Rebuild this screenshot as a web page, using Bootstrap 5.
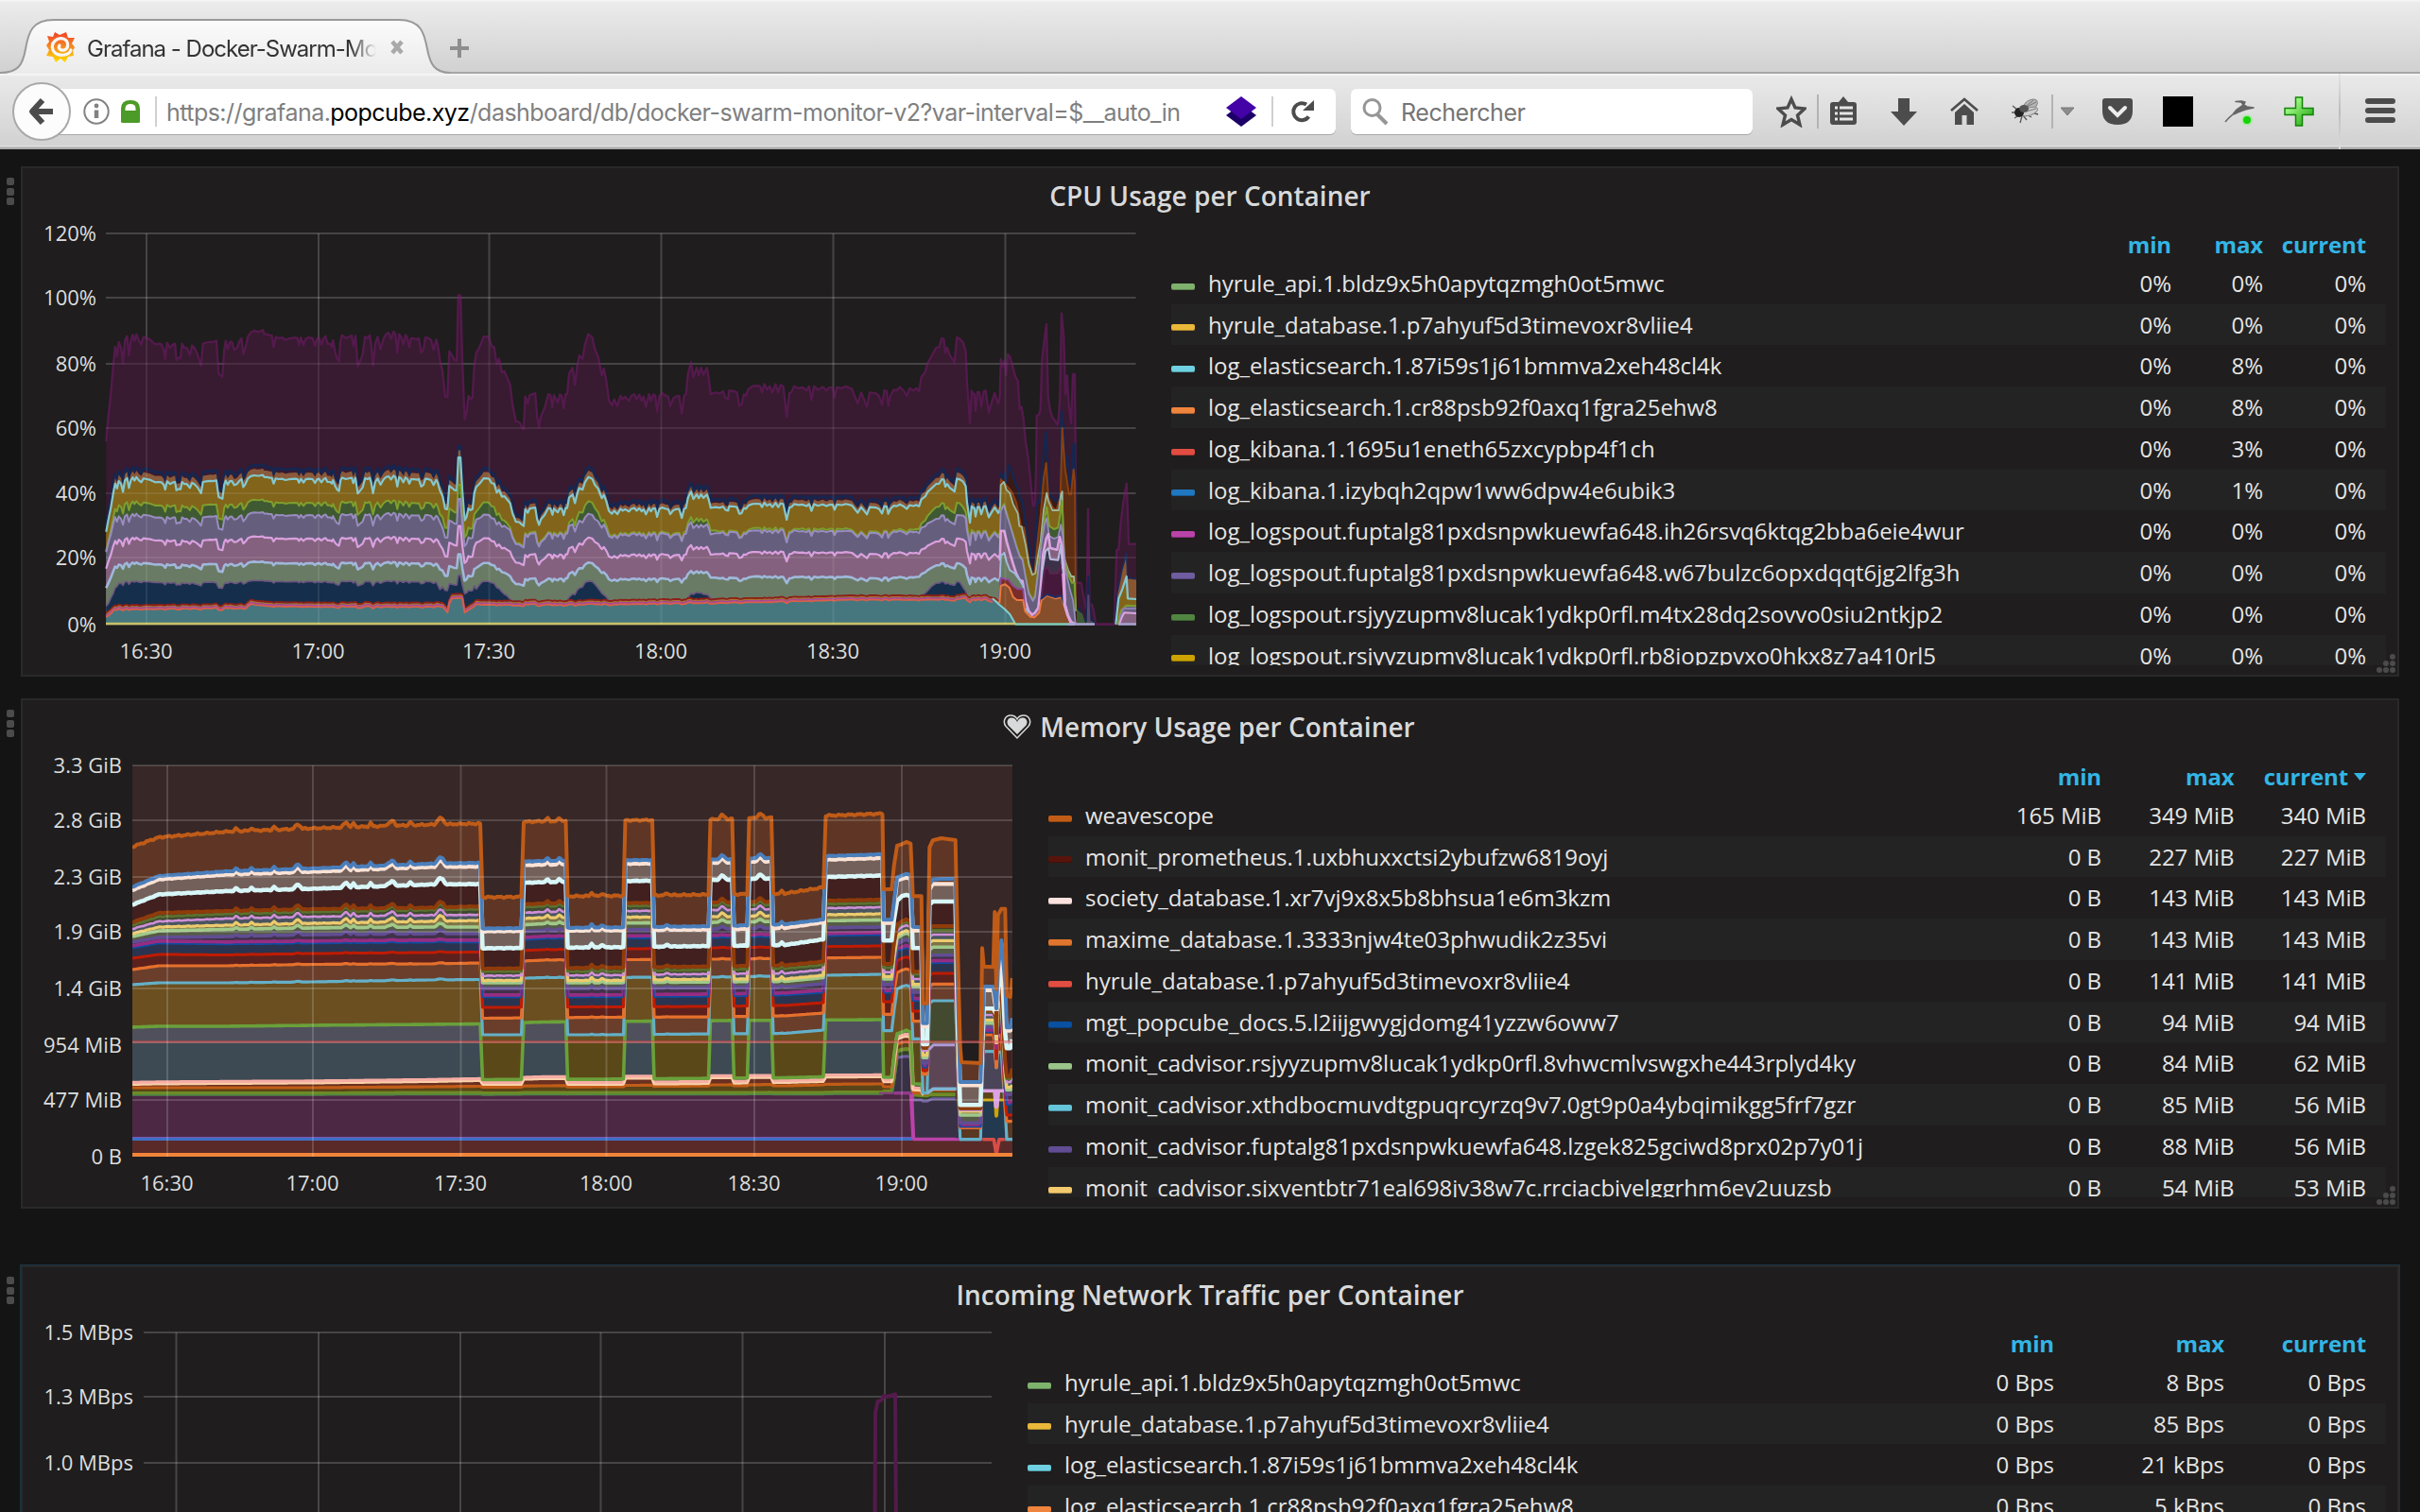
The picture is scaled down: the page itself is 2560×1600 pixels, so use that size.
<!DOCTYPE html>
<html lang="fr">
<head>
<meta charset="utf-8">
<title>Grafana - Docker-Swarm-Monitor</title>
<link rel="stylesheet" href="https://cdn.jsdelivr.net/npm/bootstrap@5.3.0/dist/css/bootstrap.min.css">
<style>
body{background:#141414;height:1600px;overflow:hidden;font-family:"Open Sans",sans-serif;color:#d8d9da}
main{height:1442px;overflow:hidden}
.tabstrip{height:78px;background:linear-gradient(#f6f6f6 0,#ebebeb 3px,#e4e4e4 30%,#d1d1d1 76px,#a6a6a6 76px)}
.tabshape{z-index:0}
.chrome-font{font-family:Inter,Roboto,sans-serif}
.tabtitle{z-index:1;left:92px;top:32px;width:306px;font-size:24px;line-height:40px;letter-spacing:-1px;color:#333;-webkit-mask-image:linear-gradient(90deg,#000 278px,transparent 306px)}
.toolbar-ff{height:80px;background:linear-gradient(#f8f8f8 0,#e9e9e9 3px,#d2d2d2 76px,#e0e0e0 76px,#e0e0e0 77px,#ababab 78px);padding-left:13px}
.backbtn{width:62px;height:62px;border:2px solid #a9a9a9;background:#fcfcfc;z-index:2}
.urlbar{width:1369px;height:48px;margin-left:-31px;border-radius:0 6px 6px 0;background:#fff;box-shadow:0 1px 0 #a8a8a8;padding-left:44px;color:#7f7f7f;font-size:25px}
.searchbar{width:425px;height:48px;margin-left:16px;border-radius:6px;background:#fff;box-shadow:0 1px 0 #a8a8a8;padding-left:11px;color:#757575;font-size:25px}
.urltext{letter-spacing:-.54px;margin-left:10px;padding-top:3px;width:1121px}
.sep{width:2px;height:32px;background:#d0d0d0}
.sepd{width:2px;height:36px;background:#b3b3b3}
.sepfull{width:2px;height:80px;background:linear-gradient(#e4e4e4,#bdbdbd 50%,#dcdcdc)}
.dashrow{padding-right:22px}
.handle{width:22px;padding:12px 7px 0 7px}
.handle i{display:block;width:8px;height:8px;border-radius:2px;background:#4b4b4b;margin-bottom:2.6px}
.gpanel{width:2516px;height:540px;background:#1f1d1d;border:2px solid #292929}
.gpanel.hot{box-shadow:0 0 0 1px #1a3442}
.ptitle{height:52px;font-size:28px;font-weight:600;line-height:52px;padding-top:3px}
.plot text{font-family:"Open Sans",sans-serif;font-size:22px;fill:#dcddde}
.legend{height:470px;margin:4px 12px 0 0;font-size:24px;letter-spacing:-.035px;color:#e5e5e5}
.lrow{height:43.75px;line-height:43.75px;padding-right:21px;white-space:nowrap}
.lrow:nth-child(odd):not(:first-child){background:#242323}
.lrow.head{color:#33b5e5;font-weight:700;padding-top:2.500px;letter-spacing:-.15px}
.swatch{width:25px;height:7px;border-radius:2px;margin:7px 14px 0 0;box-shadow:inset 0 -1px 0 rgba(0,0,0,.25)}
.grip{right:1px;bottom:1px}
</style>
<script src="https://cdn.jsdelivr.net/npm/bootstrap@5.3.0/dist/js/bootstrap.bundle.min.js"></script>
</head>
<body>
<header class="chrome-font">
  <div class="tabstrip position-relative">
    <svg class="tabshape position-absolute top-0 start-0" width="600" height="78" viewBox="0 0 600 78">
      <defs><linearGradient id="tg" x1="0" y1="0" x2="0" y2="1"><stop offset="0" stop-color="#fbfbfb"/><stop offset="1" stop-color="#ebebeb"/></linearGradient>
      <linearGradient id="gf" x1="0" y1="0" x2="0" y2="1"><stop offset="0" stop-color="#f4402a"/><stop offset=".5" stop-color="#f58b20"/><stop offset="1" stop-color="#ffdf00"/></linearGradient></defs>
      <path d="M0 77C20 77 24 68 27 52C30 34 34 21 57 21H422C446 21 449 36 452 52C455 68 460 77 476 77V78H0Z" fill="url(#tg)"/>
      <path d="M0 77C20 77 24 68 27 52C30 34 34 21 57 21H422C446 21 449 36 452 52C455 68 460 77 476 77" fill="none" stroke="#999" stroke-width="2"/>
      <g transform="translate(64 50)">
        <path d="M-6-16L-1-13L6-16L8-10L15-10L12-4L15 0L13 4L14 9L8 10L5 16L0 12L-5 16L-8 10L-15 9L-12 3L-15-2L-12-6L-14-12L-8-11Z" fill="url(#gf)"/>
        <path d="M11 3C9 9-4 11-8 3C-11-5-3-11 3-9C9-7 9 1 4 3C0 4-3 1-1-2" fill="none" stroke="#f6f6f6" stroke-width="3.2" stroke-linecap="round"/>
      </g>
      <path d="M415 44L425 56M425 44L415 56" stroke="#a9a9a9" stroke-width="4.5"/>
      <path d="M476 51H496M486 41V61" stroke="#8e8e8e" stroke-width="4"/>
    </svg>
    <div class="tabtitle position-absolute overflow-hidden text-nowrap">Grafana - Docker-Swarm-Mon</div>
  </div>
  <nav class="toolbar-ff d-flex align-items-center" aria-label="Navigation">
    <div class="backbtn rounded-circle d-flex align-items-center justify-content-center flex-shrink-0"><svg width="32" height="32" viewBox="0 0 32 32"><path d="M17 4L6 16L17 28M7 16H28" fill="none" stroke="#4c4c4c" stroke-width="6" stroke-linejoin="round" stroke-linecap="butt"/></svg></div>
    <div class="urlbar d-flex align-items-center flex-shrink-0">
      <svg width="62" height="30" viewBox="0 0 62 30"><circle cx="14" cy="15" r="12.7" fill="none" stroke="#828282" stroke-width="2"/><path d="M14 13.500V22" stroke="#828282" stroke-width="4.500"/><circle cx="14" cy="9" r="2.400" fill="#828282"/><path d="M40 14V12Q40 3 50 3Q60 3 60 12V14V26Q60 27 58 27H42Q40 27 40 26ZM44.500 14H55.500V12Q55.500 7 50 7Q44.500 7 44.500 12Z" fill="#4c9a27" fill-rule="evenodd"/></svg>
      <div class="sep" style="margin-left:14px"></div>
      <div class="urltext text-nowrap">https://grafana.<span class="text-black">popcube.xyz</span>/dashboard/db/docker-swarm-monitor-v2?var-interval=$__auto_in</div>
      <svg width="32" height="32" viewBox="0 0 32 32"><path d="M0 20L16 8L32 20L16 32Z" fill="#1d0067"/><path d="M0 12L16 0L32 12L16 24Z" fill="#4303a6"/></svg>
      <div class="sep" style="margin-left:16px"></div>
      <svg class="ms-3" width="32" height="32" viewBox="0 0 32 32"><path d="M21.500 21.500A9 9 0 1 1 19 8.500" fill="none" stroke="#4c4c4c" stroke-width="4"/><path d="M27 4V15H15Z" fill="#4c4c4c"/></svg>
    </div>
    <div class="searchbar d-flex align-items-center flex-shrink-0">
      <svg width="32" height="32" viewBox="0 0 32 32"><circle cx="11.500" cy="12" r="8.500" fill="none" stroke="#969696" stroke-width="3"/><path d="M17 19L27 29" stroke="#969696" stroke-width="4"/></svg>
      <span style="margin-left:10px;padding-top:3px;letter-spacing:-.45px">Rechercher</span>
    </div>
    <svg style="margin-left:25px" width="32" height="34" viewBox="0 0 32 34"><path d="M16 4L20 13L30 14L22.500 21L25 31L16 25.500L7 31L9.500 21L2 14L12 13Z" fill="none" stroke="#4c4c4c" stroke-width="3.400"/></svg>
    <div class="sepd" style="margin-left:11px"></div>
    <svg style="margin-left:10px" width="32" height="32" viewBox="0 0 32 32"><path d="M5 6H11L16 0L21 6H27Q30 6 30 9V27Q30 30 27 30H5Q2 30 2 27V9Q2 6 5 6Z" fill="#4c4c4c"/><path d="M7 12H10M12 12H26M7 18H10M12 18H26M7 24H10M12 24H26" stroke="#e6e6e6" stroke-width="3"/></svg>
    <svg style="margin-left:32px" width="32" height="32" viewBox="0 0 32 32"><path d="M10 2H22V16H30L16 31L2 16H10Z" fill="#4c4c4c"/></svg>
    <svg style="margin-left:32px" width="32" height="32" viewBox="0 0 32 32"><path d="M2 15L16 3L30 15" fill="none" stroke="#4c4c4c" stroke-width="2.600"/><path d="M6 17L16 8L26 17V30H18.500V20H13.500V30H6Z" fill="#4c4c4c"/></svg>
    <svg style="margin-left:33px" width="32" height="32" viewBox="0 0 32 32"><g fill="none" stroke="#555" stroke-width="1.300"><path d="M2 10L7 14M1 17L7 17M4 23L9 20M10 28L12 21M17 25L13 20M22 22L14 18M29 19L18 16"/></g><ellipse cx="21" cy="9" rx="8" ry="5" fill="#b4b4b4" stroke="#888" transform="rotate(-30 21 9)"/><ellipse cx="20" cy="16" rx="9" ry="4" fill="#cfcfcf" stroke="#8a8a8a" transform="rotate(-20 20 16)"/><path d="M15 12L27 6M16 16L27 13M17 10L24 4" stroke="#777" stroke-width="1"/><ellipse cx="9" cy="17" rx="5" ry="5" fill="#222"/><ellipse cx="14" cy="13" rx="5" ry="4" fill="#555"/></svg>
    <div class="sepd" style="margin-left:11px"></div>
    <svg style="margin-left:8px" width="14" height="12" viewBox="0 0 14 12"><path d="M0 2H14L7 10Z" fill="#8c8c8c" stroke="#777"/></svg>
    <svg style="margin-left:30px" width="32" height="32" viewBox="0 0 32 32"><path d="M3 2H29Q32 2 32 5V15Q32 30 16 30Q0 30 0 15V5Q0 2 3 2Z" fill="#4c4c4c"/><path d="M8 12L16 20L24 12" fill="none" stroke="#ededed" stroke-width="4" stroke-linecap="round"/></svg>
    <svg style="margin-left:32px" width="32" height="32"><rect width="32" height="32" fill="#000"/></svg>
    <svg style="margin-left:33px" width="32" height="34" viewBox="0 0 32 34"><path d="M1 28Q5 23 9 20L13 15L20 10L18 7L12 6.500L18 6L22 7L20.500 10L24 12L31 13L22 15L14 18L10 20" fill="#666" stroke="#666" stroke-width="1.500" stroke-linejoin="round"/><circle cx="24" cy="26" r="6" fill="#5cff47" opacity=".35"/><circle cx="24" cy="26" r="4" fill="#13d404"/></svg>
    <svg style="margin-left:31px" width="32" height="32" viewBox="0 0 32 32"><defs><linearGradient id="gp" x1="0" y1="0" x2="1" y2="1"><stop offset="0.200" stop-color="#a8ff8c"/><stop offset="1" stop-color="#119a00"/></linearGradient></defs><path d="M12.500 1H19.500V12.500H31V19.500H19.500V31H12.500V19.500H1V12.500H12.500Z" fill="url(#gp)" stroke="#128408" stroke-width="1.500"/></svg>
    <div class="sepfull" style="margin-left:26px"></div>
    <svg style="margin-left:26px" width="32" height="30" viewBox="0 0 32 30"><path d="M3 4H29M3 14H29M3 24H29" stroke="#4c4c4c" stroke-width="6" stroke-linecap="round"/></svg>
  </nav>
</header>

<main>
  <section class="dashrow d-flex" style="padding-top:18px">
    <div class="handle"><i></i><i></i><i></i></div>
    <div class="gpanel position-relative">
      <div class="ptitle text-center">CPU Usage per Container</div>
      <div class="d-flex">
        <svg class="plot flex-shrink-0" id="cpu" width="1215" height="484" viewBox="24 230 1215 484"></svg>
        <div class="legend flex-grow-1 overflow-hidden" id="lg1"></div>
      </div>
    </div>
  </section>
  <section class="dashrow d-flex" style="padding-top:23px">
    <div class="handle"><i></i><i></i><i></i></div>
    <div class="gpanel position-relative">
      <div class="ptitle d-flex justify-content-center align-items-center"><svg width="30" height="28" viewBox="0 0 30 28" style="margin:0 9px 0 -2px"><path d="M15 26L3 13.500C-1 8 3 2 8 2C11.500 2 14 4 15 6C16 4 18.500 2 22 2C27 2 31 8 27 13.500Z" fill="none" stroke="#d8d9da" stroke-width="1.500"/><path d="M15 22L5.500 12.500C3 8.500 5.500 4.500 9 4.500C12 4.500 14 6.500 15 9C16 6.500 18 4.500 21 4.500C24.500 4.500 27 8.500 24.500 12.500Z" fill="#d8d9da"/></svg>Memory Usage per Container</div>
      <div class="d-flex">
        <svg class="plot flex-shrink-0" id="mem" width="1085" height="484" viewBox="24 793 1085 484"></svg>
        <div class="legend flex-grow-1 overflow-hidden" id="lg2"></div>
      </div>
    </div>
  </section>
  <section class="dashrow d-flex" style="padding-top:60px">
    <div class="handle"><i></i><i></i><i></i></div>
    <div class="gpanel hot position-relative">
      <div class="ptitle text-center">Incoming Network Traffic per Container</div>
      <div class="d-flex">
        <svg class="plot flex-shrink-0" id="net" width="1063" height="484" viewBox="24 1393 1063 484"></svg>
        <div class="legend flex-grow-1 overflow-hidden" id="lg3"></div>
      </div>
    </div>
  </section>
</main>

<script>
/* ---------- legends ---------- */
function legend(id, w, rows, sorted){
  const cell=(t,i)=>`<span class="text-end flex-shrink-0" style="width:${w[i]}px">${t}</span>`;
  const caret=sorted?' <svg width="13" height="8" viewBox="0 0 13 8" style="margin:0 0 4px 0"><path d="M0 0H13L6.500 8Z" fill="#33b5e5"/></svg>':'';
  document.getElementById(id).innerHTML=
    `<div class="lrow head d-flex"><span class="flex-grow-1"></span>${cell('min',0)}${cell('max',1)}${cell('current'+caret,2)}</div>`+
    rows.map(r=>`<div class="lrow d-flex align-items-center"><i class="swatch flex-shrink-0" style="background:${r[0]}"></i><span class="flex-grow-1">${r[1]}</span>${cell(r[2],0)}${cell(r[3],1)}${cell(r[4],2)}</div>`).join('');
}
legend('lg1',[90,97,109],[
 ['#7eb26d','hyrule_api.1.bldz9x5h0apytqzmgh0ot5mwc','0%','0%','0%'],
 ['#eab839','hyrule_database.1.p7ahyuf5d3timevoxr8vliie4','0%','0%','0%'],
 ['#6ed0e0','log_elasticsearch.1.87i59s1j61bmmva2xeh48cl4k','0%','8%','0%'],
 ['#ef843c','log_elasticsearch.1.cr88psb92f0axq1fgra25ehw8','0%','8%','0%'],
 ['#e24d42','log_kibana.1.1695u1eneth65zxcypbp4f1ch','0%','3%','0%'],
 ['#1f78c1','log_kibana.1.izybqh2qpw1ww6dpw4e6ubik3','0%','1%','0%'],
 ['#ba43a9','log_logspout.fuptalg81pxdsnpwkuewfa648.ih26rsvq6ktqg2bba6eie4wur','0%','0%','0%'],
 ['#705da0','log_logspout.fuptalg81pxdsnpwkuewfa648.w67bulzc6opxdqqt6jg2lfg3h','0%','0%','0%'],
 ['#508642','log_logspout.rsjyyzupmv8lucak1ydkp0rfl.m4tx28dq2sovvo0siu2ntkjp2','0%','0%','0%'],
 ['#cca300','log_logspout.rsjyyzupmv8lucak1ydkp0rfl.rb8iopzpvxo0hkx8z7a410rl5','0%','0%','0%']]);
legend('lg2',[120,140.5,139.5],[
 ['#c15c17','weavescope','165 MiB','349 MiB','340 MiB'],
 ['#58140c','monit_prometheus.1.uxbhuxxctsi2ybufzw6819oyj','0 B','227 MiB','227 MiB'],
 ['#fce2de','society_database.1.xr7vj9x8x5b8bhsua1e6m3kzm','0 B','143 MiB','143 MiB'],
 ['#e0752d','maxime_database.1.3333njw4te03phwudik2z35vi','0 B','143 MiB','143 MiB'],
 ['#e24d42','hyrule_database.1.p7ahyuf5d3timevoxr8vliie4','0 B','141 MiB','141 MiB'],
 ['#0a50a1','mgt_popcube_docs.5.l2iijgwygjdomg41yzzw6oww7','0 B','94 MiB','94 MiB'],
 ['#9ac48a','monit_cadvisor.rsjyyzupmv8lucak1ydkp0rfl.8vhwcmlvswgxhe443rplyd4ky','0 B','84 MiB','62 MiB'],
 ['#65c5db','monit_cadvisor.xthdbocmuvdtgpuqrcyrzq9v7.0gt9p0a4ybqimikgg5frf7gzr','0 B','85 MiB','56 MiB'],
 ['#614d93','monit_cadvisor.fuptalg81pxdsnpwkuewfa648.lzgek825gciwd8prx02p7y01j','0 B','88 MiB','56 MiB'],
 ['#f2c96d','monit_cadvisor.sjxyentbtr71eal698jv38w7c.rrciacbiyelggrhm6ey2uuzsb','0 B','54 MiB','53 MiB']],true);
legend('lg3',[120,180,150],[
 ['#7eb26d','hyrule_api.1.bldz9x5h0apytqzmgh0ot5mwc','0 Bps','8 Bps','0 Bps'],
 ['#eab839','hyrule_database.1.p7ahyuf5d3timevoxr8vliie4','0 Bps','85 Bps','0 Bps'],
 ['#6ed0e0','log_elasticsearch.1.87i59s1j61bmmva2xeh48cl4k','0 Bps','21 kBps','0 Bps'],
 ['#ef843c','log_elasticsearch.1.cr88psb92f0axq1fgra25ehw8','0 Bps','5 kBps','0 Bps']]);
document.querySelectorAll('.gpanel').forEach(p=>p.insertAdjacentHTML('beforeend',
 '<svg class="grip position-absolute" width="22" height="22" viewBox="0 0 22 22" fill="#4b4b4b"><circle cx="18" cy="4" r="3"/><circle cx="11" cy="11" r="3"/><circle cx="18" cy="11" r="3"/><circle cx="4" cy="18" r="3"/><circle cx="11" cy="18" r="3"/><circle cx="18" cy="18" r="3"/></svg>'));

/* ---------- shared chart helpers ---------- */
const P=s=>s.trim().split(/[;\s]+/).map(p=>p.split(',').map(Number));
const line=p=>'M'+p.map(a=>a[0].toFixed(1)+' '+a[1].toFixed(1)).join('L');
const area=(p,b)=>line(p)+`L${p[p.length-1][0]} ${b}L${p[0][0]} ${b}Z`;
const fillp=(p,b,c,x='')=>`<path d="${area(p,b)}" fill="${c}" ${x}/>`;
const strk=(p,c,w=2)=>`<path d="${line(p)}" fill="none" stroke="${c}" stroke-width="${w}" stroke-linejoin="round"/>`;
function lerpAt(st,x){ if(x<=st[0][0])return st[0][1]; for(let i=1;i<st.length;i++) if(x<=st[i][0]){const a=st[i-1],b=st[i];return a[1]+(b[1]-a[1])*(x-a[0])/(b[0]-a[0]);} return st[st.length-1][1]; }
function grid(x0,x1,y0,y1,hs,vs,o){ return `<g stroke="#fff" stroke-opacity="${o}" stroke-width="2">`+hs.map(y=>`<path d="M${x0} ${y}H${x1}"/>`).join('')+vs.map(x=>`<path d="M${x} ${y0}V${y1}"/>`).join('')+'</g>'; }
function labels(hs,ht,xr,vs,yb){ return hs.map((y,i)=>ht[i]?`<text x="${xr}" y="${y+8}" text-anchor="end">${ht[i]}</text>`:'').join('')+(yb?vs.map((x,i)=>`<text x="${x}" y="${yb}" text-anchor="middle">${T[i]}</text>`).join(''):''); }
const T=['16:30','17:00','17:30','18:00','18:30','19:00'];

/* ---------- CPU ---------- */
const rawA=P(`284,872 290,800 297,730 303,650 308,597 313,625 318,583 324,600 329,645 334,580 340,566 345,622 350,580 355,562 360,580 365,560 371,578 378,590 384,568 392,572 400,575 408,583 416,590 424,588 432,590 438,605 442,632 447,585 455,600 463,590 468,588 472,635 478,628 483,630 487,588 493,600 500,600 508,622 514,593 520,600 528,618 538,652 543,588 552,585 562,582 570,583 579,579 585,675 595,684 600,605 604,580 609,604 615,583 620,582 627,606 634,600 641,580 646,572 651,618 657,598 663,568 671,555 680,550 688,553 696,552 703,548 707,560 714,560 721,564 727,564 732,598 738,568 746,572 755,570 764,577 773,573 790,570 796,572 800,592 805,570 812,592 818,573 826,570 836,572 843,594 848,574 853,570 860,590 866,572 871,566 876,588 884,588 888,598 891,578 897,614 902,632 907,640 911,580 915,563 925,572 933,568 941,564 945,595 951,565 957,654 964,636 970,620 977,567 983,572 989,564 993,590 998,652 1004,588 1010,568 1018,604 1026,574 1033,560 1040,556 1046,574 1053,553 1058,560 1063,614 1068,560 1073,568 1079,590 1085,562 1090,572 1095,598 1100,572 1108,573 1116,575 1120,572 1127,614 1133,605 1138,570 1145,571 1153,577 1160,606 1167,576 1171,590 1177,636 1184,670 1191,742 1197,744 1202,610 1209,622 1216,635 1222,638 1226,448 1232,448 1237,640 1243,808 1248,790 1253,740 1259,750 1264,744 1269,650 1274,615 1282,600 1288,585 1294,567 1305,568 1309,572 1315,595 1322,598 1329,648 1335,632 1343,672 1349,668 1356,685 1365,708 1371,765 1380,814 1389,816 1396,830 1401,838 1405,742 1412,762 1417,738 1432,732 1437,800 1442,832 1447,800 1457,775 1467,735 1473,738 1478,774 1482,738 1492,760 1498,736 1503,740 1508,776 1513,735`).map(([x,y])=>[x/2.529,150+y/2.751]);
const rawB=P(`0,735 5,675 14,658 20,708 26,655 31,622 40,632 46,590 55,560 65,570 72,605 80,625 86,660 90,680 95,660 102,700 108,752 116,768 122,750 130,770 138,740 144,750 150,742 160,755 166,740 174,735 180,750 187,736 193,754 198,742 204,772 212,735 217,754 223,736 228,738 233,786 239,740 246,732 256,740 262,742 267,770 275,748 281,742 290,740 297,792 303,740 308,735 313,675 321,642 327,685 336,658 341,680 347,658 353,678 362,658 367,690 372,735 384,730 396,733 404,726 410,745 417,750 420,724 432,726 440,730 446,768 452,765 458,735 463,740 470,720 480,712 490,710 500,712 505,730 511,705 518,722 525,712 532,730 540,706 547,730 553,708 560,712 569,802 576,732 582,728 588,712 600,718 610,715 620,724 627,712 633,752 640,712 650,722 662,714 672,724 680,715 688,716 693,745 699,715 712,718 722,712 738,720 745,740 753,762 762,730 770,752 777,772 784,730 800,732 808,740 816,766 822,724 828,726 832,768 838,740 846,722 854,724 862,714 872,725 880,740 888,718 897,724 905,718 912,726 918,685 928,670 934,645 944,625 956,600 964,598 971,572 976,575 980,615 985,600 992,622 1004,642 1010,570 1018,574 1026,585 1033,610 1036,700 1044,820 1048,725 1053,735`).map(([x,y])=>[600+x/2.45,150+y/2.751]);
const C=s=>P(s).map(([x,y])=>[1030+x/3,310+y/3]);
const rawC1=C(`2,320 6,375 12,315 18,315 24,360 32,312 38,310 48,380 58,345 67,318 78,352 83,330`);
const rawC2=C(`86,210 90,235 97,215 103,262 109,195 116,205 124,235 132,265 140,280 146,370 152,362 158,400 165,475 172,515 180,590 188,676 194,676 198,560 200,390 206,388 212,372 217,215 224,150 231,100 236,330 243,375 250,395 258,405 266,418 270,395 274,330 279,65 286,140 291,322 296,262 302,360 309,414 315,258 321,258 324,600 327,920 341,920 348,960 355,1000 359,985 363,686 368,985 375,990 381,1010 387,1052 446,1052 449,950 454,816 460,815 466,740 474,670 485,605 489,700 492,797 516,797`);
const top1=[...rawA,...rawB,...rawC1], Z=661, U=3.45;
const pct=top1.map(p=>(Z-p[1])/U);
const smooth=top1.map((p,i)=>{let s=0,n=0;for(let k=0;k<top1.length;k++)if(Math.abs(top1[k][0]-p[0])<9){s+=pct[k];n++}return s/n});
const wgt=smooth.map((v,i)=>{const x=top1[i][0];if(x>466&&x<502)return 1;return Math.max(0,Math.min(1,(v-71)/13))});
const teal=[[112,3],[125,4.6],[260,5],[265,6.2],[285,5.6],[345,5.4],[469,5.4],[474,3.4],[476,8],[489,8.2],[491,3.6],[504,6],[600,6],[700,6.4],[800,6.8],[900,7.6],[1045,7.6],[1057,6]];
const tl=top1.map((p,i)=>[p[0],lerpAt(teal,p[0])+((p[0]>466&&p[0]<502)?0:(pct[i]-smooth[i])*.07)]);
const band=(l,h,floor)=>top1.map((p,i)=>{const f=l+(h-l)*wgt[i];let v=f*pct[i];if(floor)v=Math.max(v,tl[i][1]+floor);return [p[0],Z-v*U]});
const tealL=d=>tl.map(p=>[p[0],Z-(p[1]+d)*U]);
let s=`<g>`+grid(112,1201.500,247,661,[247,315,385,453,522,590,661],[155,337,517.500,699.500,881.500,1063.500],.1)+`</g>`;
const full=[...top1,...rawC2];
s+=fillp(full,Z,'#381a31')+strk(full,'#531a4c',2.400);
const nvy=band(.54,.543),brn=band(.525,.53),lb=band(.506,.508),lime=band(.402,.425),pg=band(.396,.382),pk=band(.305,.3),sg=band(.2,.214),nv=band(.1,.15,1.200);
s+=strk(nvy,'#17264f',3)+fillp(brn,Z,'#8a5a3a')+fillp(lb,Z,'#82641a')+strk(lb,'#84c8cf',2.200);
s+=fillp(lime,Z,'#3f5a32')+strk(lime,'#7e9e2f')+fillp(pg,Z,'#655f7d')+strk(pg,'#9a8cc0')+fillp(pk,Z,'#84617e')+strk(pk,'#d9a0de',2.200);
s+=fillp(sg,Z,'#697b64')+strk(sg,'#9fb8da',2.600)+fillp(nv,Z,'#152e4b')+strk(nv,'#6b5580',1.600);
s+=fillp(tealL(0),Z,'#46777f')+strk(tealL(1.300),'#8e1f17',2)+strk(tealL(.8),'#a8742c',1.600)+strk(tealL(.4),'#a8489e',2)+strk(tealL(0),'#d8604a',1.800);
/* redistribution phase after 19:00 */
const q=(pts,f,st,w)=>{const p=C(pts);return fillp(p,Z,f)+(st?strk(p,st,w||2):'')};
s+=q('83,668 86,570 92,590 98,575 104,600 110,547 118,560 126,585 134,608 142,625 148,660 155,660 160,700 170,770 180,820 186,885 193,885 200,670 207,665 212,640 218,540 230,440 237,620 245,645 260,660 268,665 275,620 279,375 285,430 291,560 297,515 303,590 309,612 317,480 321,480 324,1000 331,1003 340,1015 355,1048 359,1040 364,900 368,1030 375,1035 384,1050 387,1052','#3a1a18','#17264f',2.600);
s+=q('83,690 86,592 104,612 120,630 135,665 142,700 150,740 160,745 175,850 186,890 193,890 205,770 213,700 222,590 230,540 237,650 250,680 262,690 275,650 281,430 290,560 303,640 309,640 317,560 321,600 324,1010','#5b2d12','#8a3f10');
s+=q('83,700 86,610 96,600 104,625 115,635 125,670 140,700 145,740 152,742 165,800 175,860 186,895 196,890 203,840 212,790 222,690 232,635 237,660 250,690 270,690 277,640 281,630 285,830 290,850 300,880 310,900 318,900 324,1010','#82641a','#9ab8a0',1.800);
s+=q('83,780 86,690 96,670 105,700 120,750 135,800 145,830 155,845 165,900 175,950 188,975 195,960 205,880 215,790 225,720 232,680 240,740 255,750 268,745 275,700 281,660 287,840 300,895 312,920 320,920 324,1010','#3f5a32','#7e9e2f');
s+=q('83,784 86,693 96,674 105,704 120,754 135,804 145,834 155,849 165,905 175,955 188,978 195,965 205,885 215,795 225,735 232,715 240,772 255,780 268,775 277,735 283,770 292,880 305,940 315,975 324,1052','#655f7d','#9a8cc0',1.600);
s+=q('83,850 86,755 97,755 105,790 115,825 125,860 135,890 145,910 155,915 165,980 175,1010 185,1022 195,1015 205,1000 213,930 220,830 230,780 237,765 243,810 265,815 273,775 280,800 287,900 290,990 300,1025 310,1045 320,1052','#84617e','#dca4e0',2.600);
s+=q('83,910 86,835 97,825 105,855 115,880 130,890 145,910 157,930 163,1000 175,1015','#697b64','#9fb8da');
s+=q('213,975 220,870 228,820 237,810 243,845 268,848 277,800 283,890 290,990 296,1052','#3c3148','#b8bce0');
s+=q('213,985 224,880 235,870 243,890 268,890 275,865 283,920 290,1000','#46193c','#5a2450');
s+=q('82,970 86,905 110,910 125,930 140,940 157,940 163,1000','#7a2c28','#8a4a98');
s+=q('82,985 86,930 100,925 113,935 125,965 137,975 157,975 163,1010 180,1028 193,1030 208,1015 215,975 232,960 260,970 278,965 290,1000 302,1030 308,1052','#864e2b','#e87840');
s+=strk(C('213,972 232,957 260,966 278,961 290,996'),'#1f2f66',2)+q('60,970 82,990 100,1005 115,1020 133,1052','#46777f','#80cdd0');
s+=strk(C('284,890 289,990 298,1022 308,1045 320,1050'),'#dca4e0',3);
s+=q('327,1003 335,1012 345,1018 355,1050 360,1042 366,1040 375,1042 384,1050','#3f5a32')+strk(C('362,1052 364,960 368,1052'),'#55466a',2);
s+=q('448,1052 454,960 470,880 485,825 489,905 516,908','#8a5632','#1c2b55',1.800)+q('451,1052 460,970 472,940 485,900 489,970 516,972','#82641a','#84c8cf',2.200)+q('456,1052 462,1030 468,1008 485,992 516,994','#655f7d','#7e9e2f')+strk(C('462,1040 475,1002 516,1002'),'#8a7cb0')+q('462,1052 470,1030 478,1015 516,1017','#84617e','#dca4e0');
s+=`<path d="M112 660H1074" stroke="#c9c169" stroke-width="2.500"/><path d="M1074 660.500H1137" stroke="#80cdb8" stroke-width="2.500"/><path d="M1130 660.500H1158M1183 660.500H1202" stroke="#a9a4d4" stroke-width="2.500"/><path d="M1158 660.500H1179" stroke="#531a4c" stroke-width="2.500"/>`;
const ch=[247,315,385,453,522,590,661],cv=[155,337,517.500,699.500,881.500,1063.500];
s+=grid(112,1201.500,247,661,ch.slice(0,6),cv,.085)+labels(ch,['120%','100%','80%','60%','40%','20%','0%'],102,cv.map(x=>x-.5),697);
document.getElementById('cpu').innerHTML=s;

/* ---------- memory ---------- */
/* columns: x, then o bl wp cw br ol vi ye lg pu mg re or cy li sa ob gr pd ma */
const hi=[[140,896,938.5,942,957.5,976,979,983,988,991,997,1001,1014,1026,1042,1087,1146,1151,1157,1158,1158],
[168,886,927,930.5,946.5,966,970,975,981,985,992,996,1010,1022,1040,1086,1145.5,1151,1157,1158,1158],
[240,880,922,925.5,943,964,967,972,979,983.5,991,997,1010.5,1022,1040,1086,1145,1151,1157,1158,1158],
[331,876.5,919,922.5,940.5,962,965,970,977,982,989,996,1009,1020.500,1039,1085,1144.500,1151,1157,1158,1158],
[455,872.5,914,917.5,936,960.5,963,968.5,975,981,988,995,1008,1020,1037,1084,1143,1150,1156.5,1158,1158],
[508,871.5,913,917,935.5,959,962,968,974,981,988,995,1007.5,1019,1036.500,1083.500,1142,1149.500,1156.500,1157.500,1157.500],
[575,869,911,915,933.5,956,959,965,971,977.5,984.5,991,1005,1016,1034.500,1081.500,1140,1149,1156.500,1157.500,1157.500],
[762,867,909.500,913,931,955,958,963,970,976,983,990,1003,1015,1034,1080,1139,1148,1156.500,1157.500,1157.500],
[933,861,904,908,926.5,952,955.700,960,967,973.500,981,987,1001,1013,1031,1079,1138,1147,1156,1157,1157]];
const lo=[[510,949.5,982.5,985.5,1003.5,1025,1028,1032.5,1037.5,1040,1046,1053,1066,1077.500,1095,1142.500,1146,1150.500,1157,1158,1158],
[640,948,981.500,984.500,1002.500,1024,1028,1032,1037.500,1040,1046,1053,1065.500,1076.500,1095,1142,1146,1150,1156.500,1158,1158],
[760,946.5,980,983.500,1001,1022.500,1026,1030.500,1036,1039,1045,1052,1065,1076,1094,1141,1145,1149,1156.500,1158,1158],
[830,945.5,978,982,1000,1021.500,1025,1030,1036,1038.500,1044.500,1051,1064,1075,1093.500,1140.500,1144,1149,1156.500,1158,1158],
[871,939,973,976,994,1017.500,1021,1026,1032,1034.500,1041,1048,1061,1072,1090,1139.500,1143,1148,1156.500,1157.500,1157.500]];
const bumps=[[250,4],[266,4],[290,4],[315,7],[366,7],[374,5],[392,4.5],[410,3],[415,7],[434,4],[465,9],[469,5],[579,4],[592,4.5],[626,5],[637,4],[706,3],[764,6],[804,6],[827,3]];
const colAt=(tb,x)=>{let i=1;while(i<tb.length-1&&x>tb[i][0])i++;const a=tb[i-1],b=tb[i],t=Math.max(0,Math.min(1,(x-a[0])/(b[0]-a[0])));return a.map((v,k)=>k?v+(b[k]-v)*t:x)};
const segs=[[140,508,1],[510.500,551.500,0],[554,598.500,1],[600.500,659.500,0],[661.500,690,1],[692,749.500,0],[751.500,774.500,1],[776.500,790.500,0],[792.500,816,1],[818,871,0],[873.500,933.500,1]];
const cols=[];
segs.forEach(([a,b,h])=>{const xs=[];for(let x=a;x<b;x+=1.500)xs.push(x);xs.push(b);
 xs.forEach(x=>{const c=colAt(h?hi:lo,x);let d=0;bumps.forEach(([bx,am])=>{if(bx>a&&bx<b)d+=am*Math.max(0,1-Math.abs(x-bx)/(am>5?5:3))*.8});
  const n=.7*Math.sin(x*.61)+.5*Math.sin(x*1.27);
  for(let k=1;k<c.length;k++){const f=k<=4?1:k<=8?.9:k<=10?.6:k<=14?.15:0;c[k]-=d*f+(k==1?n*.8:k<9?n*.3:0)}
  cols.push(c)})});
/* rest of the range, sampled on a finer scale */
const tail=[
[14,303,400,410,466,540,552,566,580,588,605,625,660,700,752,900,910,930,945,950,950],
[40,303,400,410,466,540,552,566,580,588,605,625,660,700,752,900,910,930,945,950,950],
[47,228,345,360,400,470,482,495,512,520,535,555,590,630,690,830,850,875,900,910,950],
[57,165,265,275,340,415,425,435,450,458,478,492,530,568,620,762,775,795,818,838,950],
[72,160,260,270,325,405,412,422,440,448,468,487,522,560,612,757,768,790,812,835,950],
[86,153,254,266,321,398,408,418,434,442,463,482,518,556,608,750,765,787,810,833,950],
[100,158,258,270,325,405,412,422,440,448,468,487,522,560,612,757,768,790,812,835,950],
[107,325,422,434,490,565,572,588,605,612,630,650,690,722,778,920,935,950,955,972,1096],
[134,325,424,434,490,565,572,588,605,612,630,650,690,722,778,922,937,950,957,972,1096],
[139,665,728,738,795,806,808,815,830,838,855,862,878,890,950,951,952,953,958,976,1096],
[152,665,728,738,795,806,808,815,830,838,855,862,878,890,950,951,952,953,958,976,1096],
[160,170,288,305,352,430,440,455,472,495,518,538,578,612,665,805,940,945,955,972,1096],
[170,148,272,286,342,420,433,447,466,487,512,530,570,604,657,797,935,940,955,968,1096],
[197,141,270,286,342,420,433,447,466,487,512,530,570,604,657,797,935,940,955,968,1096],
[242,147,270,286,342,420,433,447,466,487,512,530,570,604,657,797,935,940,955,968,1096],
[250,520,640,700,760,820,830,840,850,860,870,875,880,885,890,950,960,980,1000,1020,1096],
[257,800,915,925,988,998,1000,1004,1008,1020,1045,1050,1055,1060,1097,1097,1097,1097,1097,1097,1097],
[261,852,915,925,988,998,1000,1004,1008,1020,1045,1050,1055,1060,1097,1097,1097,1097,1097,1097,1097],
[322,855,915,925,988,998,1000,1004,1008,1020,1045,1050,1055,1060,1097,1097,1097,1097,1097,1097,1097],
[327,490,760,770,800,820,825,830,840,845,850,860,870,880,900,945,945,945,970,970,970],
[332,548,612,624,682,688,692,702,718,728,740,750,756,765,818,945,945,945,970,970,970],
[362,550,612,624,682,688,692,702,718,728,740,750,756,765,818,945,945,945,970,970,970],
[367,375,640,660,690,700,705,710,720,730,740,750,770,790,820,945,945,945,970,970,970],
[372,620,682,690,700,710,740,765,780,790,800,810,840,868,870,990,990,990,1020,1020,1020],
[377,385,560,590,620,640,650,660,670,680,690,700,740,770,820,945,945,945,970,970,970],
[388,365,465,475,530,620,630,640,655,662,672,690,720,765,820,945,945,945,970,970,970],
[400,365,600,680,760,850,860,870,880,890,900,930,960,990,1000,1097,1097,1097,1097,1097,1097],
[405,640,742,752,808,898,905,915,932,940,955,980,1020,1040,1097,1097,1097,1097,1097,1097,1097],
[416,645,742,752,808,898,905,915,932,940,955,980,1020,1040,1097,1097,1097,1097,1097,1097,1097],
[422,585,712,745,780,872,885,900,925,935,950,975,1018,1038,1097,1097,1097,1097,1097,1097,1097]];
tail.forEach(c=>cols.push(c.map((v,k)=>k?840+v/3:930+v/3)));
const S=i=>cols.map(c=>[c[0],c[i+1]]);
const fills=['#5f3625','#5f3625','#73605a','#41201f','#3f2a1a','#3f4a30','#4a5560','#7d7346','#565b47','#40324a','#2a3450','#5c211c','#6a3e2b','#6b4f20','#4f505c','#6a3020','#5a4418','#2f4229','#383146','#4d2845'];
const below={13:'#5b4818',14:'#3d4a53'};
const lines=['#bf5b17','#4a7ebb','#fbe2d5','#d8f5f7','#8f3b0a','#5c7030','#d08fd8','#eccb6e','#a0c98a','#614d93','#962d82','#bf1b00','#e5702c','#64b0c8','#6aa03a','#f7ada4','#c15c17','#6d8a26','#705da0','#ba43a9'];
const lw=[4,4,4.200,4.600,4,3,2.600,3.200,3.600,3.600,4,3,3.200,3.200,3.600,4.400,3.200,4,3,3];
const MB=1224;
const mh=[810,868,928,986,1046,1103,1164,1224],mv=[177,331,487.500,641.500,798,954];
let m=`<defs><clipPath id="under"><rect x="130" y="1103" width="950" height="130"/></clipPath><clipPath id="plotm"><rect x="140" y="805" width="931" height="420"/></clipPath></defs><rect x="140" y="810" width="931" height="293" fill="#372727"/><g clip-path="url(#plotm)">`;
for(let i=0;i<20;i++){m+=fillp(S(i),MB,fills[i]);if(below[i])m+=fillp(S(i),MB,below[i],'clip-path="url(#under)"')}
/* services that only run late in the window */
const D=(a,c)=>`<path d="${line(P(a).map(([x,y])=>[930+x/3,840+y/3]))}Z" fill="${c}"/>`;
m+=D('160,665 170,657 242,657 244,797 170,797 158,810','#434a30')+D('160,805 170,797 242,797 248,935 170,935 155,945','#5c4656')+D('257,1060 322,1060 322,1097 257,1097','#5a3822')+D('328,818 396,818 396,945 328,945','#4a4558')+D('328,970 398,970 398,1097 328,1097','#22394f')+D('403,1040 425,1040 425,1097 403,1097','#5a3822');
m+=`<rect x="140" y="1206" width="931" height="18" fill="#5a2a28"/>`;
for(let i=19;i>=0;i--){
  let p=S(i);
  if(i>=18)p=p.filter(a=>a[0]>945&&a[0]<1012);
  if(i>=15&&i<18)p=p.filter(a=>a[0]<(i==15?978:1012));
  if(i==14)p=p.filter(a=>a[0]<978);
  m+=strk(p,lines[i],lw[i]);
  if(i==17)m+=strk(S(17).filter(a=>a[0]<946).map(a=>[a[0],a[1]+1.800]),'#508642',1.800);
  if(i==15)m+=strk(p.map(a=>[a[0],a[1]+2]),'#f9d0a8',2);
  if(i==10)m+=strk(S(10).map(a=>[a[0],a[1]+2.500]),'#0f4da5',1.600);
}
const R=(a,c,w)=>strk(P(a).map(([x,y])=>[930+x/3,840+y/3]),c,w);
m+=R('158,812 172,797 240,797','#b09ad8',3)+R('152,950 172,937 245,937','#7fb4d4',3.500)+R('330,943 396,943','#dba2e2',3.600)+R('330,972 396,972','#cca300',3)+R('368,945 372,1022 377,945','#cca300',4)+R('368,940 372,992 377,940','#dba2e2',5)+R('372,690 372,765','#8f3b0a',4.500)+R('372,765 372,800','#eccb6e',3.500)+R('372,795 372,815','#962d82',4)+R('372,812 372,850','#bf1b00',3.500)+R('372,845 372,870','#e5702c',3.500);
m+=R('104,950 110,1097 254,1097','#ba43a9',3)+R('0,950 104,950','#8a3a86',2)+`<path d="M140 1205H965" stroke="#3d6fc4" stroke-width="4"/><path d="M140 1203.500H965" stroke="#7a5ab0" stroke-width="1"/>`;
m+=R('255,1097 322,1097','#64b0c8',3)+R('328,1097 364,1097 372,1145 381,1097 398,1097','#d84d48',3.600)+R('400,1097 425,1097','#64b0c8',3);
m+=`<path d="M140 1222H1071" stroke="#f2843a" stroke-width="4"/><path d="M140 1102.500H1071" stroke="#d84040" stroke-opacity=".5" stroke-width="3"/></g>`;
m+=grid(140,1071,810,1224,mh.slice(0,7),mv,.16)+labels([810,868,928,986,1046,1105.500,1164,1224],['3.3 GiB','2.8 GiB','2.3 GiB','1.9 GiB','1.4 GiB','954 MiB','477 MiB','0 B'],129,mv.map(x=>x-.5),1260);
document.getElementById('mem').innerHTML=m;

/* ---------- network ---------- */
const nh=[1410,1478,1548],nvx=[186.500,337,487,635.500,785.500,936];
document.getElementById('net').innerHTML=grid(152,1049,1410,1824,nh,nvx,.18)+labels(nh,['1.5 MBps','1.3 MBps','1.0 MBps'],141,nvx,0)+
 `<path d="M925.500 1620L926 1495L928.500 1483L932 1482L935 1477L938 1478L942 1477L947 1475.500L948 1620" fill="none" stroke="#531a4c" stroke-width="4" stroke-linejoin="round"/>`;
</script>
</body>
</html>
